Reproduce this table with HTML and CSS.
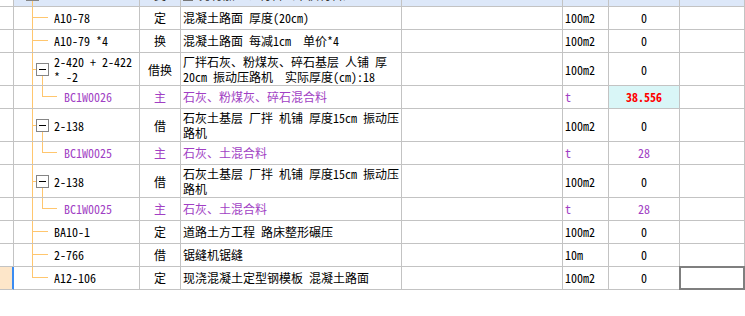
FILE: index.html
```html
<!DOCTYPE html>
<html>
<head>
<meta charset="utf-8">
<link rel="stylesheet" href="styles.css">
</head>
<body>
<div class="grid">
  <div class="row top">
    <div class="c c0"></div>
    <div class="c code"><i class="rootbox"></i><i class="v rootv"></i></div>
    <div class="c type"><span class="t">类</span></div>
    <div class="c desc"><span class="t"><i class="chk"></i> 另行加工、材料（甲供材料）</span></div>
    <div class="c"></div>
    <div class="c unit"></div>
    <div class="c qty"></div>
    <div class="c"></div>
  </div>

  <div class="row">
    <div class="c c0"></div>
    <div class="c code"><i class="v"></i><i class="h"></i><span class="t">A10-78</span></div>
    <div class="c type"><span class="t">定</span></div>
    <div class="c desc"><span class="t">混凝土路面 厚度(20cm)</span></div>
    <div class="c"></div>
    <div class="c unit"><span class="t">100m2</span></div>
    <div class="c qty"><span class="t">0</span></div>
    <div class="c"></div>
  </div>

  <div class="row">
    <div class="c c0"></div>
    <div class="c code"><i class="v"></i><i class="h"></i><span class="t">A10-79 *4</span></div>
    <div class="c type"><span class="t">换</span></div>
    <div class="c desc"><span class="t">混凝土路面 每减1cm  单价*4</span></div>
    <div class="c"></div>
    <div class="c unit"><span class="t">100m2</span></div>
    <div class="c qty"><span class="t">0</span></div>
    <div class="c"></div>
  </div>

  <div class="row tall">
    <div class="c c0"></div>
    <div class="c code"><i class="v"></i><i class="h short"></i><i class="box"></i><i class="cv"></i><span class="t">2-420 + 2-422<br>* -2</span></div>
    <div class="c type"><span class="t">借换</span></div>
    <div class="c desc"><span class="t">厂拌石灰、粉煤灰、碎石基层 人铺 厚<br>20cm 振动压路机  实际厚度(cm):18</span></div>
    <div class="c"></div>
    <div class="c unit"><span class="t">100m2</span></div>
    <div class="c qty"><span class="t">0</span></div>
    <div class="c"></div>
  </div>

  <div class="row child purple">
    <div class="c c0"></div>
    <div class="c code"><i class="v"></i><i class="cv2"></i><i class="ch"></i><span class="t">BC1W0026</span></div>
    <div class="c type"><span class="t">主</span></div>
    <div class="c desc"><span class="t">石灰、粉煤灰、碎石混合料</span></div>
    <div class="c"></div>
    <div class="c unit"><span class="t">t</span></div>
    <div class="c qty hl"><span class="t">38.556</span></div>
    <div class="c"></div>
  </div>

  <div class="row tall">
    <div class="c c0"></div>
    <div class="c code"><i class="v"></i><i class="h short"></i><i class="box"></i><i class="cv"></i><span class="t">2-138</span></div>
    <div class="c type"><span class="t">借</span></div>
    <div class="c desc"><span class="t">石灰土基层 厂拌 机铺 厚度15cm 振动压<br>路机</span></div>
    <div class="c"></div>
    <div class="c unit"><span class="t">100m2</span></div>
    <div class="c qty"><span class="t">0</span></div>
    <div class="c"></div>
  </div>

  <div class="row child purple">
    <div class="c c0"></div>
    <div class="c code"><i class="v"></i><i class="cv2"></i><i class="ch"></i><span class="t">BC1W0025</span></div>
    <div class="c type"><span class="t">主</span></div>
    <div class="c desc"><span class="t">石灰、土混合料</span></div>
    <div class="c"></div>
    <div class="c unit"><span class="t">t</span></div>
    <div class="c qty"><span class="t">28</span></div>
    <div class="c"></div>
  </div>

  <div class="row tall">
    <div class="c c0"></div>
    <div class="c code"><i class="v"></i><i class="h short"></i><i class="box"></i><i class="cv"></i><span class="t">2-138</span></div>
    <div class="c type"><span class="t">借</span></div>
    <div class="c desc"><span class="t">石灰土基层 厂拌 机铺 厚度15cm 振动压<br>路机</span></div>
    <div class="c"></div>
    <div class="c unit"><span class="t">100m2</span></div>
    <div class="c qty"><span class="t">0</span></div>
    <div class="c"></div>
  </div>

  <div class="row child purple">
    <div class="c c0"></div>
    <div class="c code"><i class="v"></i><i class="cv2"></i><i class="ch"></i><span class="t">BC1W0025</span></div>
    <div class="c type"><span class="t">主</span></div>
    <div class="c desc"><span class="t">石灰、土混合料</span></div>
    <div class="c"></div>
    <div class="c unit"><span class="t">t</span></div>
    <div class="c qty"><span class="t">28</span></div>
    <div class="c"></div>
  </div>

  <div class="row">
    <div class="c c0"></div>
    <div class="c code"><i class="v"></i><i class="h"></i><span class="t">BA10-1</span></div>
    <div class="c type"><span class="t">定</span></div>
    <div class="c desc"><span class="t">道路土方工程 路床整形碾压</span></div>
    <div class="c"></div>
    <div class="c unit"><span class="t">100m2</span></div>
    <div class="c qty"><span class="t">0</span></div>
    <div class="c"></div>
  </div>

  <div class="row">
    <div class="c c0"></div>
    <div class="c code"><i class="v"></i><i class="h"></i><span class="t">2-766</span></div>
    <div class="c type"><span class="t">借</span></div>
    <div class="c desc"><span class="t">锯缝机锯缝</span></div>
    <div class="c"></div>
    <div class="c unit"><span class="t">10m</span></div>
    <div class="c qty"><span class="t">0</span></div>
    <div class="c"></div>
  </div>

  <div class="row">
    <div class="c c0 sel"></div>
    <div class="c code"><i class="v end"></i><i class="h"></i><span class="t">A12-106</span></div>
    <div class="c type"><span class="t">定</span></div>
    <div class="c desc"><span class="t">现浇混凝土定型钢模板 混凝土路面</span></div>
    <div class="c"></div>
    <div class="c unit"><span class="t">100m2</span></div>
    <div class="c qty"><span class="t">0</span></div>
    <div class="c focus"></div>
  </div>
</div>
</body>
</html>
```

FILE: styles.css
```css
* { box-sizing: border-box; }
html, body { margin: 0; padding: 0; background: #fff; }
body {
  font-family: "Noto Sans Mono CJK SC", "Noto Sans CJK SC", sans-serif;
  font-size: 12px;
  line-height: 14px;
  color: #000;
  overflow: hidden;
  width: 745px;
  height: 316px;
}
.grid { width: 745px; }
.row {
  display: grid;
  grid-template-columns: 14px 126px 41px 221px 161px 46px 71px 1fr;
  height: 23px;
}
.row.tall { height: 33px; line-height: 15px; }
.row.top { height: 24px; margin-top: -17px; }
.c {
  border-right: 1px solid #c3c3c3;
  border-bottom: 1px solid #c3c3c3;
  display: flex;
  align-items: center;
  white-space: pre;
  position: relative;
  overflow: hidden;
}
.top .c { background: #dde8f9; }
.top .c0 { background: #fff; }
.top .type, .top .desc { color: #333; }
.t { display: block; }
.code { padding-left: 40px; }
.child .code { padding-left: 50px; }
.type { justify-content: center; }
.desc { padding-left: 2px; }
.unit { padding-left: 2px; }
.qty { justify-content: center; }
.purple { color: #a13fc4; }
.hl { background: #d9f6f7; color: #ff0000; font-weight: bold; }

.v, .h, .cv, .cv2, .ch { position: absolute; background: #ffc66e; }
.v { left: 18px; top: 0; bottom: 0; width: 1px; }
.v.end { bottom: auto; height: 50%; }
.h { left: 18px; width: 16px; height: 1px; top: calc(50% - 1px); }
.h.short { width: 4px; top: 50%; }
.box {
  position: absolute;
  left: 22px;
  top: calc(50% - 6px);
  width: 13px;
  height: 13px;
  border: 1px solid #858585;
  background: #fff;
}
.box::after {
  content: "";
  position: absolute;
  left: 2px;
  right: 2px;
  top: 5px;
  height: 1px;
  background: #000;
}
.cv { left: 28px; top: calc(50% + 7px); bottom: 0; width: 1px; }
.cv2 { left: 28px; top: 0; height: 50%; width: 1px; }
.ch { left: 28px; width: 15px; height: 1px; top: calc(50% - 1px); }

.rootbox {
  position: absolute;
  left: 12px;
  top: 5px;
  width: 13px;
  height: 13px;
  border: 1px solid #858585;
  background: #fff;
}
.rootv { top: 18px; }
.chk {
  display: inline-block;
  width: 10px;
  height: 10px;
  border: 1px solid #777;
  vertical-align: -1px;
}

.sel {
  background: #fde6c9;
  border-right-color: #3b8cf2;
  box-shadow: inset -1px 0 0 #3b8cf2;
}
.focus { overflow: visible; }
.focus::after {
  content: "";
  position: absolute;
  left: -1px;
  top: -1px;
  right: -1px;
  bottom: -1px;
  border: 2px solid #7f7f7f;
}
```
